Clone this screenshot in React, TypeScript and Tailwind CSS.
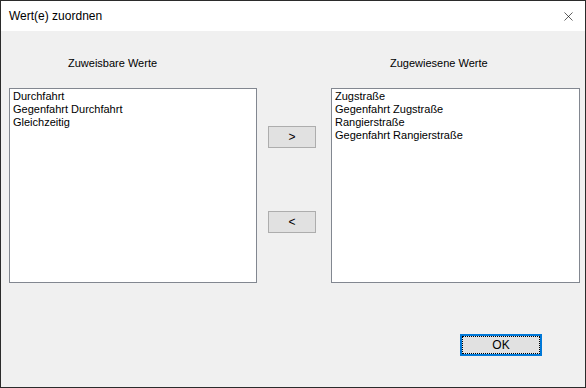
import { X } from 'lucide-react'

const FONT = "font-['Liberation_Sans',Arial,sans-serif]"

const AVAILABLE = ['Durchfahrt', 'Gegenfahrt Durchfahrt', 'Gleichzeitig']
const ASSIGNED = ['Zugstraße', 'Gegenfahrt Zugstraße', 'Rangierstraße', 'Gegenfahrt Rangierstraße']

function ListColumn({ title, items, width }: { title: string; items: string[]; width: string }) {
  return (
    <div className={`flex flex-col ${width}`}>
      <div className="h-4 pl-[59px] text-[11px] leading-4 text-black">{title}</div>
      <ul className="mt-[17px] h-[195px] border border-[#828790] bg-white px-[3px] pt-[1px] text-[11px] leading-[13px] text-black">
        {items.map((item) => (
          <li key={item} className="whitespace-nowrap">
            {item}
          </li>
        ))}
      </ul>
    </div>
  )
}

function MoveButton({ label }: { label: string }) {
  return (
    <button className="h-[22px] w-[48px] border border-[#adadad] bg-[#e1e1e1] text-[12px] leading-none text-black">
      {label}
    </button>
  )
}

export default function App() {
  return (
    <div className={`flex h-[388px] w-[586px] flex-col border border-[#2b2b2b] bg-[#f0f0f0] ${FONT}`}>
      <header className="flex h-[30px] shrink-0 items-center justify-between bg-white pl-2 pr-[9px]">
        <span className="text-[12px] text-black">Wert(e) zuordnen</span>
        <X size={15} strokeWidth={1} className="text-black" aria-hidden />
      </header>

      <div className="flex items-start pl-2 pt-6">
        <ListColumn title="Zuweisbare Werte" items={AVAILABLE} width="w-[248px]" />
        <div className="ml-[11px] mt-[71px] flex flex-col gap-[63px]">
          <MoveButton label=">" />
          <MoveButton label="<" />
        </div>
        <div className="ml-[15px]">
          <ListColumn title="Zugewiesene Werte" items={ASSIGNED} width="w-[249px]" />
        </div>
      </div>

      <div className="mt-[51px] flex justify-end pr-[43px]">
        <button className="h-[22px] w-[82px] border-2 border-[#0078d7] bg-[#e1e1e1] p-0">
          <span className="flex h-full w-full items-center justify-center border border-dotted border-black text-[12px] text-black">
            OK
          </span>
        </button>
      </div>
    </div>
  )
}
